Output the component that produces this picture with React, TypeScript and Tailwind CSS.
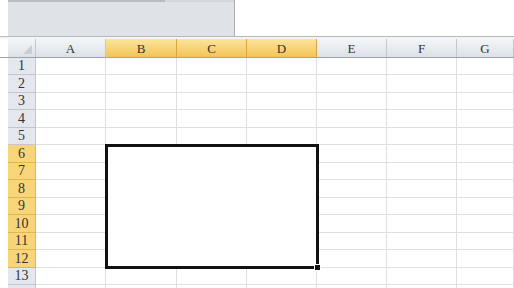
import React from 'react';

const columns = [
  { label: 'A', width: 'w-[70px]', selected: false },
  { label: 'B', width: 'w-[71px]', selected: true },
  { label: 'C', width: 'w-[70px]', selected: true },
  { label: 'D', width: 'w-[70px]', selected: true },
  { label: 'E', width: 'w-[70px]', selected: false },
  { label: 'F', width: 'w-[70px]', selected: false },
  { label: 'G', width: 'flex-1', selected: false },
];

const rows = Array.from({ length: 14 }, (_, i) => i + 1);

const App: React.FC = () => {
  return (
    <div className="w-[514px] h-[288px] overflow-hidden bg-white text-[#333] font-['Liberation_Serif',serif]">
      {/* Top formula area */}
      <div className="flex h-[37px] border-b border-[#b6bac0]">
        <div className="w-[8px]" />
        <div className="w-[227px] bg-[#dfe2e7] border-r border-[#a9adb3] flex flex-col">
          <div className="flex h-[2px]">
            <div className="w-[157px] bg-[#b9bdc3]" />
            <div className="flex-1 bg-[#d3d6db]" />
          </div>
        </div>
        <div className="flex-1" />
      </div>
      <div className="h-[2px] bg-[#f3f4f6]" />

      {/* Column header */}
      <div className="flex h-[19px] pl-[8px] border-b border-[#9ea3aa]">
        <div className="relative w-[28px] border-r border-[#c3c7cd] bg-gradient-to-b from-[#f3f5f8] to-[#dde1e7]">
          <div className="absolute right-[3px] bottom-[3px] w-0 h-0 border-l-[9px] border-l-transparent border-b-[9px] border-b-[#c9ccd1]" />
        </div>
        {columns.map(col => (
          <div
            key={col.label}
            className={`${col.width} flex items-center justify-center text-[13px] leading-none border-r ${
              col.selected
                ? 'bg-gradient-to-b from-[#fbe59a] to-[#f3c355] border-[#d9a73a]'
                : 'bg-gradient-to-b from-[#f3f5f8] to-[#dde1e7] border-[#c3c7cd]'
            }`}
          >
            {col.label}
          </div>
        ))}
      </div>

      {/* Grid */}
      <div className="relative pl-[8px]">
        {rows.map(r => {
          const selected = r >= 6 && r <= 12;
          return (
            <div key={r} className={`flex ${r % 2 === 1 ? 'h-[17px]' : 'h-[18px]'}`}>
              <div
                className={`w-[28px] flex items-center justify-center text-[14px] leading-none border-r border-b ${
                  selected
                    ? 'bg-[#f9d57a] border-[#e3b650]'
                    : 'bg-[#e4e8ee] border-[#c3c7cd]'
                }`}
              >
                {r < 14 ? r : ''}
              </div>
              {columns.map(col => (
                <div key={col.label} className={`${col.width} border-r border-b border-[#dfe0e1]`} />
              ))}
            </div>
          );
        })}

        {/* Selection box */}
        <div className="absolute left-[105px] top-[86px] w-[214px] h-[125px] bg-white border-[3px] border-[#111]" />
        <div className="absolute left-[314px] top-[206px] w-[7px] h-[7px] bg-[#111] border border-white" />
      </div>
    </div>
  );
};

export default App;
